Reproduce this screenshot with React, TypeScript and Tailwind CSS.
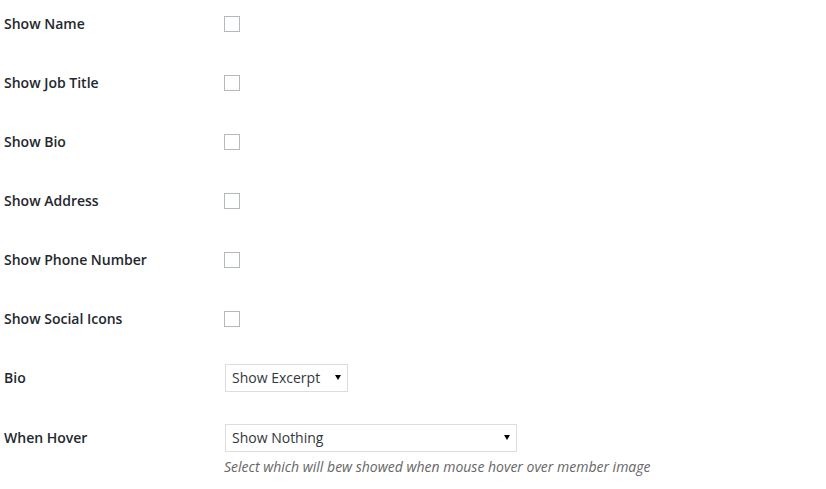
import React from 'react';

const checkboxRows = [
  'Show Name',
  'Show Job Title',
  'Show Bio',
  'Show Address',
  'Show Phone Number',
  'Show Social Icons',
];

const Select = ({ value, width }: { value: string; width: string }) => (
  <div
    className={`${width} h-[28px] mt-[10px] flex items-center justify-between pl-[6px] pr-[6px] border border-[#dddddd] bg-white text-[14px] text-[#32373c]`}
  >
    <span className="-mt-[2px]">{value}</span>
    <svg width="6" height="5" viewBox="0 0 6 5" className="-mt-[1px]">
      <path d="M0 0h6L3 5z" fill="#000" />
    </svg>
  </div>
);

const App: React.FC = () => {
  return (
    <div className="w-[826px] h-[489px] bg-white overflow-hidden font-['Open_Sans',sans-serif]">
      <div className="pl-[4px]">
        {checkboxRows.map((label) => (
          <div key={label} className="flex items-start h-[59px]">
            <div className="w-[220px] mt-[15px] h-[18px] leading-[18px] text-[14px] font-semibold text-[#23282d]">
              {label}
            </div>
            <div className="mt-[16px] w-[16px] h-[16px] border border-[#b4b9be] bg-white" />
          </div>
        ))}

        <div className="flex items-start h-[60px]">
          <div className="w-[221px] mt-[15px] h-[18px] leading-[18px] text-[14px] font-semibold text-[#23282d]">
            Bio
          </div>
          <Select value="Show Excerpt" width="w-[123px]" />
        </div>

        <div className="flex items-start">
          <div className="w-[221px] mt-[15px] h-[18px] leading-[18px] text-[14px] font-semibold text-[#23282d]">
            When Hover
          </div>
          <div className="flex flex-col">
            <Select value="Show Nothing" width="w-[292px]" />
            <p className="mt-[6px] text-[14px] italic text-[#666666] leading-[18px] -ml-[1px]">
              Select which will bew showed when mouse hover over member image
            </p>
          </div>
        </div>
      </div>
    </div>
  );
};

export default App;
